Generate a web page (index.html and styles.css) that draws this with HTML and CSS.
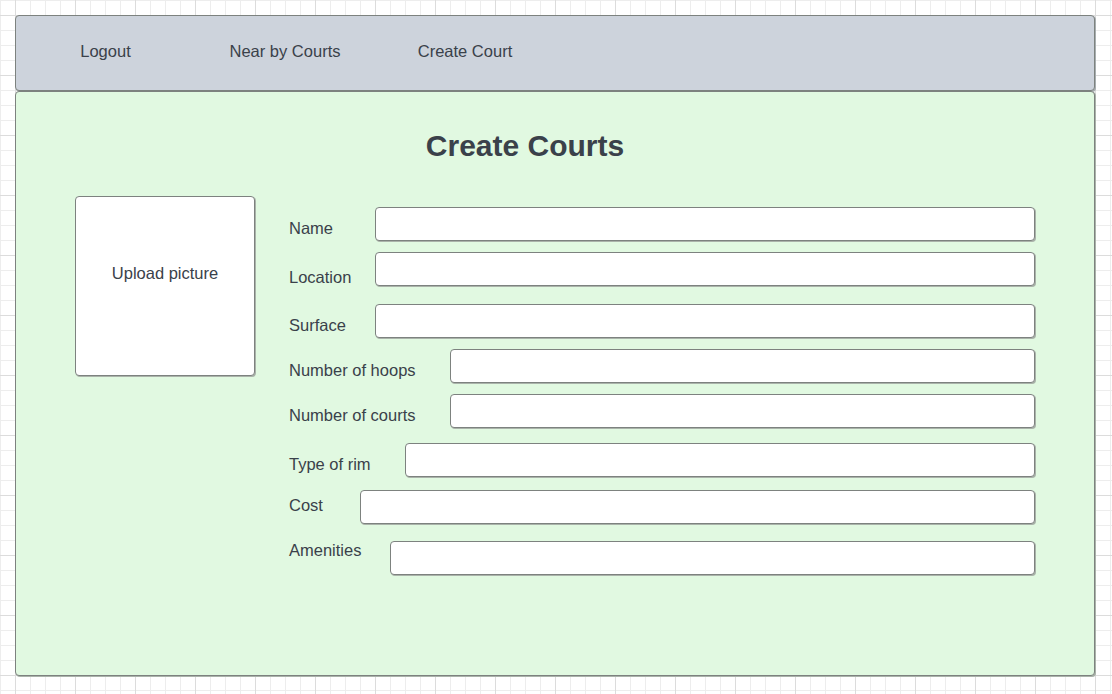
FILE: index.html
```html
<!DOCTYPE html>
<html lang="en">
<head>
<meta charset="utf-8">
<title>Create Courts</title>
<link rel="stylesheet" href="styles.css">
</head>
<body>
<div class="frame">
  <header class="topbar">
    <nav class="nav">
      <a class="nav-item" href="#">Logout</a>
      <a class="nav-item" href="#">Near by Courts</a>
      <a class="nav-item" href="#">Create Court</a>
    </nav>
  </header>
  <main class="panel">
    <h1 class="title">Create Courts</h1>
    <div class="content">
      <div class="upload">Upload picture</div>
      <form class="form">
        <div class="row row-name"><label class="label">Name</label><input class="field" type="text"></div>
        <div class="row row-location"><label class="label">Location</label><input class="field" type="text"></div>
        <div class="row row-surface"><label class="label">Surface</label><input class="field" type="text"></div>
        <div class="row row-hoops"><label class="label">Number of hoops</label><input class="field" type="text"></div>
        <div class="row row-courts"><label class="label">Number of courts</label><input class="field" type="text"></div>
        <div class="row row-rim"><label class="label">Type of rim</label><input class="field" type="text"></div>
        <div class="row row-cost"><label class="label">Cost</label><input class="field" type="text"></div>
        <div class="row row-amenities"><label class="label">Amenities</label><input class="field" type="text"></div>
      </form>
    </div>
  </main>
</div>
</body>
</html>
```
FILE: styles.css
```css
html, body {
  margin: 0;
  padding: 0;
  height: 100%;
}

body {
  font-family: "Liberation Sans", Arial, sans-serif;
  color: #3a414a;
  background-color: #ffffff;
  background-image:
    linear-gradient(#dcdcdc 1px, transparent 1px),
    linear-gradient(90deg, #dcdcdc 1px, transparent 1px),
    linear-gradient(#ededed 1px, transparent 1px),
    linear-gradient(90deg, #ededed 1px, transparent 1px);
  background-size: 60px 60px, 60px 60px, 15px 15px, 15px 15px;
  background-position: 15px 15px, 15px 15px, 0 0, 0 0;
  min-height: 694px;
  padding: 15px 0 0 15px;
  box-sizing: border-box;
}

.frame {
  width: 1080px;
  display: flex;
  flex-direction: column;
}

.topbar {
  height: 76px;
  box-sizing: border-box;
  background: #cdd3dc;
  border: 1px solid #7d827f;
  border-radius: 4px;
  box-shadow: 1px 1px 0 #a8aeb0;
}

.nav {
  display: flex;
  padding-top: 25px;
}

.nav-item {
  width: 180px;
  text-align: center;
  font-size: 16.5px;
  line-height: 20px;
  color: #3a414a;
  text-decoration: none;
}

.nav-item:first-child {
  width: 179px;
}

.panel {
  height: 585px;
  box-sizing: border-box;
  background: #e1f9e1;
  border: 1px solid #7d827f;
  border-radius: 4px;
  box-shadow: 1px 1px 0 #aab3aa;
  display: flex;
  flex-direction: column;
}

.title {
  margin: 36px 0 0 0;
  padding-right: 60px;
  font-size: 30px;
  line-height: 36px;
  font-weight: bold;
  text-align: center;
}

.content {
  display: flex;
  align-items: flex-start;
  margin-top: 32px;
  padding: 0 59px;
}

.upload {
  width: 180px;
  height: 180px;
  box-sizing: border-box;
  flex: none;
  background: #ffffff;
  border: 1px solid #7d827f;
  border-radius: 4px;
  box-shadow: 1px 1px 0 #aab3aa;
  padding-top: 66px;
  text-align: center;
  font-size: 16.5px;
  line-height: 20px;
}

.form {
  flex: 1;
  margin: 11px 0 0 34px;
  display: flex;
  flex-direction: column;
}

.row {
  display: flex;
  align-items: flex-start;
  height: 34px;
}

.label {
  flex: none;
  font-size: 16.5px;
  line-height: 20px;
  margin-top: 11px;
  white-space: nowrap;
}

.field {
  flex: 1;
  min-width: 0;
  height: 34px;
  box-sizing: border-box;
  margin: 0;
  padding: 0 8px;
  background: #ffffff;
  border: 1px solid #7d827f;
  border-radius: 4px;
  box-shadow: 1px 1px 0 #aab3aa;
  font: inherit;
  outline: none;
}

.row-name .label { width: 86px; }

.row-location { margin-top: 11px; }
.row-location .label { width: 86px; margin-top: 15px; }

.row-surface { margin-top: 18px; }
.row-surface .label { width: 86px; }

.row-hoops { margin-top: 11px; }
.row-hoops .label { width: 161px; }

.row-courts { margin-top: 11px; }
.row-courts .label { width: 161px; }

.row-rim { margin-top: 15px; }
.row-rim .label { width: 116px; margin-top: 11px; }

.row-cost { margin-top: 13px; }
.row-cost .label { width: 71px; margin-top: 5px; }

.row-amenities { margin-top: 17px; }
.row-amenities .label { width: 101px; margin-top: -1px; }
```
